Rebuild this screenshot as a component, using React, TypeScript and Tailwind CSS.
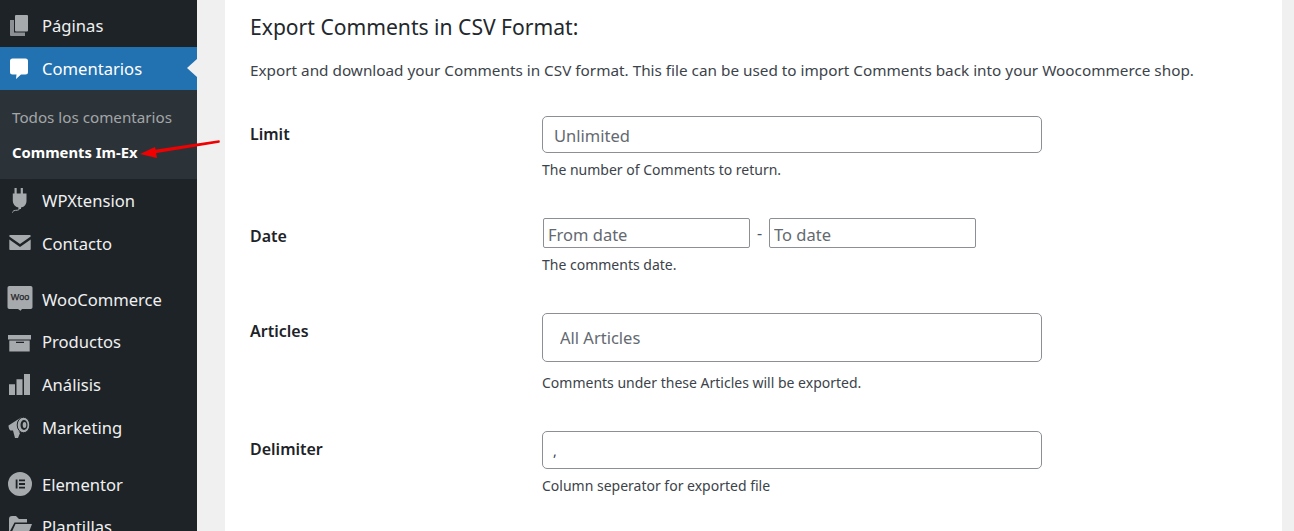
import type { ReactNode } from 'react';

const icons: Record<string, ReactNode> = {
  pages: (
    <>
      <path d="M2 6h4v12.500h11V22H3a1 1 0 0 1-1-1z" fill="#8c8f94" />
      <path d="M8 1h11a1 1 0 0 1 1 1v14.500a1 1 0 0 1-1 1H8a1 1 0 0 1-1-1V2a1 1 0 0 1 1-1z" />
    </>
  ),
  comment: <path d="M4.500 1.500h13A2.500 2.500 0 0 1 20 4v11a2.500 2.500 0 0 1-2.500 2.500h-4.500l-5 4.500.5-4.500h-4A2.500 2.500 0 0 1 2 15V4a2.500 2.500 0 0 1 2.500-2.500z" />,
  plug: (
    <>
      <path d="M6.500 0h2.200v5.500h4V0h2.200v5.500h3.600v7.500a6.500 6.500 0 0 1-5.500 6.400V21h-2.600v-1.600A6.500 6.500 0 0 1 4.800 13V5.500h1.700z" />
      <path d="M11.500 20.500c0 2.500-4 1.300-5.800 2.300-.7.400-1 1-1.200 1.800" fill="none" stroke="currentColor" strokeWidth="1" />
    </>
  ),
  mail: <path d="M2.500 4h19c.8 0 1.200.4 1.200 1v.5L12 13 1.300 5.500V5c0-.6.4-1 1.200-1zM1.300 8.500 12 16l10.700-7.500V18c0 .6-.4 1-1.200 1h-19c-.8 0-1.200-.4-1.200-1z" />,
  woo: (
    <>
      <path d="M1.300-1h21.400A1.800 1.800 0 0 1 24.500.8v19.400a1.800 1.800 0 0 1-1.800 1.800H14l-1.500 1.800L10 22H1.300a1.800 1.800 0 0 1-1.800-1.800V.8A1.800 1.800 0 0 1 1.300-1z" />
      <text x="12" y="13" textAnchor="middle" fontSize="9" fontWeight="400" fill="#1d2327" stroke="#1d2327" strokeWidth="0.250" fontFamily="'Liberation Sans', sans-serif">Woo</text>
    </>
  ),
  archive: <path d="M0 5h23v4.500H0zM1.300 10.500h20.400v11H1.300zM8 11.800v1.200h8v-1.200z" fillRule="evenodd" />,
  bars: <path d="M1 11.300h6V22H1zM8.500 6.300h6V22h-6zM16 1h6v21h-6z" />,
  megaphone: (
    <>
      <path d="M.5 10.500 13 2.500l4 14.500-6.500-.5L12 18l-2 5H7l-2-7.500H2.500c-1.300-.5-2-3-2-5z" />
      <ellipse cx="15.500" cy="10" rx="6.300" ry="7.800" stroke="#1d2327" strokeWidth="1" />
      <ellipse cx="16" cy="10" rx="3.500" ry="5" fill="#1d2327" />
      <ellipse cx="16.500" cy="10" rx="1.800" ry="3" />
    </>
  ),
  elementor: <path d="M12 0a12 12 0 1 0 0 24 12 12 0 0 0 0-24zM7.700 7.500h1.800v9H7.700zM11 7.500h6v1.800h-6zM11 11.100h6v1.800h-6zM11 14.700h6v1.800h-6z" fillRule="evenodd" />,
  folder: <path d="M1 4a3 3 0 0 1 3-3h4l3 3h8v3.500H6.500L1 18zM7.500 9H24l-5 13H1.500z" />,
};

function MenuIcon({ name, white }: { name: string; white?: boolean }) {
  return (
    <svg viewBox="0 0 24 24" fill="currentColor" className={`h-[24px] w-[24px] shrink-0 overflow-visible ${white ? 'text-white' : 'text-[#a7aaad]'}`}>
      {icons[name]}
    </svg>
  );
}

function MenuItem({ icon, label, className = '' }: { icon: string; label: string; className?: string }) {
  return (
    <div className={`flex h-[42.7px] items-center pl-[8px] text-[16.600px] text-[#f0f0f1] ${className}`}>
      <MenuIcon name={icon} />
      <span className="ml-[10px] pt-[2px]">{label}</span>
    </div>
  );
}

function Row({ label, hint, hintGap, children }: { label: string; hint: string; hintGap: string; children: ReactNode }) {
  return (
    <div className="mt-[38px] flex">
      <div className="w-[292px] shrink-0 pt-[8px] text-[16px] font-semibold leading-[20px] text-[#1d2327]">{label}</div>
      <div className="flex-1">
        {children}
        <p className={`${hintGap} text-[14px] leading-[20px] text-[#3c434a]`}>{hint}</p>
      </div>
    </div>
  );
}

export default function App() {
  return (
    <div className="relative flex h-[531px] w-[1294px] overflow-hidden bg-[#f0f0f1] font-['Noto_Sans',sans-serif]">
      <aside className="w-[197px] shrink-0 bg-[#1d2327] pt-[4px]">
        <MenuItem icon="pages" label="Páginas" className="!h-[43px]" />
        <div className="relative flex h-[43px] items-center bg-[#2271b1] pl-[8px] text-[16.600px] text-white">
          <MenuIcon name="comment" white />
          <span className="ml-[10px] pt-[2px]">Comentarios</span>
          <div className="absolute right-0 top-[12px] h-0 w-0 border-y-[9px] border-r-[10px] border-y-transparent border-r-[#f0f0f1]" />
        </div>
        <div className="flex h-[89px] flex-col bg-[#2c3338] pl-[12px] pt-[10px]">
          <div className="flex h-[35px] items-center text-[15.200px] text-[#a3a6a9]">Todos los comentarios</div>
          <div className="flex h-[35px] items-center text-[14.800px] font-bold text-white">Comments Im-Ex</div>
        </div>
        <MenuItem icon="plug" label="WPXtension" />
        <MenuItem icon="mail" label="Contacto" />
        <MenuItem icon="woo" label="WooCommerce" className="mt-[13.500px]" />
        <MenuItem icon="archive" label="Productos" />
        <MenuItem icon="bars" label="Análisis" />
        <MenuItem icon="megaphone" label="Marketing" />
        <MenuItem icon="elementor" label="Elementor" className="mt-[14px]" />
        <MenuItem icon="folder" label="Plantillas" />
      </aside>

      <main className="ml-[28px] h-full w-[1057px] bg-white pl-[25px]">
        <h2 className="pt-[12px] text-[21.100px] leading-[30px] text-[#23282d]">Export Comments in CSV Format:</h2>
        <p className="mb-[-2px] mt-[18px] whitespace-nowrap text-[15.300px] leading-[20px] text-[#3c434a]">
          Export and download your Comments in CSV format. This file can be used to import Comments back into your Woocommerce shop.
        </p>

        <Row label="Limit" hint="The number of Comments to return." hintGap="mt-[7px]">
          <input
            placeholder="Unlimited"
            className="block h-[37px] w-[500px] rounded-[5px] border border-[#8c8f94] px-[11px] pt-[2px] text-[16.500px] outline-none placeholder:text-[#646970]"
          />
        </Row>
        <Row label="Date" hint="The comments date." hintGap="mt-[7px]">
          <div className="flex h-[30px] items-center pl-[1px] text-[16px] text-[#50575e]">
            <input
              placeholder="From date"
              className="h-[30px] w-[207px] rounded-[2px] border border-[#8c8f94] px-[4px] pt-[2px] text-[16.500px] outline-none placeholder:text-[#646970]"
            />
            <span className="w-[19px] text-center">-</span>
            <input
              placeholder="To date"
              className="h-[30px] w-[207px] rounded-[2px] border border-[#8c8f94] px-[4px] pt-[2px] text-[16.500px] outline-none placeholder:text-[#646970]"
            />
          </div>
        </Row>
        <Row label="Articles" hint="Comments under these Articles will be exported." hintGap="mt-[11px]">
          <input
            placeholder="All Articles"
            className="block h-[49px] w-[500px] rounded-[5px] border border-[#8c8f94] px-[17px] text-[16.500px] outline-none placeholder:text-[#646970]"
          />
        </Row>
        <Row label="Delimiter" hint="Column seperator for exported file" hintGap="mt-[7px]">
          <input
            defaultValue=","
            className="block h-[38px] w-[500px] rounded-[5px] border border-[#8c8f94] px-[10px] text-[14px] text-[#3c434a] outline-none"
          />
        </Row>
      </main>

      {/* red annotation arrow drawn over the menu */}
      <svg className="absolute left-[135px] top-[135px] h-[30px] w-[90px]" viewBox="0 0 90 30">
        <path d="M84 7 L20 17.500 L20 15.500 L84 6 Z" fill="#f00000" stroke="#f00000" strokeWidth="1.500" strokeLinejoin="round" />
        <path d="M5 19 L20 12 L22 23 Z" fill="#f00000" />
      </svg>
    </div>
  );
}
